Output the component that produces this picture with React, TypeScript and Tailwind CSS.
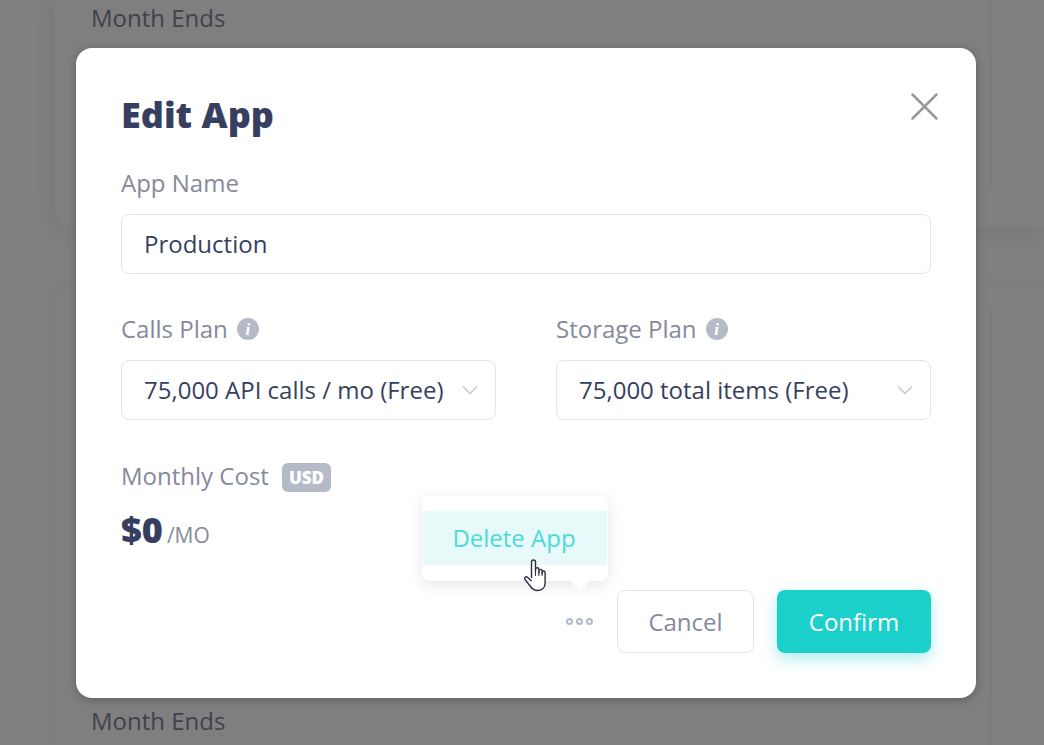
const FONT = "font-['Open_Sans',sans-serif]";

function Chevron() {
  return (
    <svg width="16" height="10" viewBox="0 0 16 10" fill="none" className="shrink-0">
      <path d="M1 1.500 8 8.500 15 1.500" stroke="#c4c8d2" strokeWidth="1.500" />
    </svg>
  );
}

function InfoIcon() {
  return (
    <span className="flex h-[22px] w-[22px] items-center justify-center rounded-full bg-[#b5bac8] font-['Liberation_Serif',serif] text-[17px] font-bold italic leading-none text-white">
      i
    </span>
  );
}

function SelectBox({ label, value }: { label: string; value: string }) {
  return (
    <div className="flex-1">
      <div className="mb-[15px] flex h-[32px] items-center gap-[9px] text-[24px] text-[#858a9c]">
        {label}
        <InfoIcon />
      </div>
      <div className="flex h-[60px] items-center justify-between rounded-[8px] border border-[#e3e3ee] pl-[22px] pr-[17px] text-[24px] text-[#373f61]">
        <span>{value}</span>
        <Chevron />
      </div>
    </div>
  );
}

export default function App() {
  return (
    <div className={`relative h-[745px] w-[1044px] overflow-hidden bg-[#7f7f7f] ${FONT}`}>
      {/* Page behind the overlay */}
      <div className="flex h-full flex-col">
        <div className="relative ml-[54px] h-[228px] rounded-bl-[22px] bg-[#7f7f7f] shadow-[0_2px_20px_rgba(0,0,0,0.07)]">
          <div className="pl-[37px] pt-[2px] text-[24px] leading-[32px] text-[#3f424d]">Month Ends</div>
          <div className="absolute bottom-[38px] right-[53px] top-0 w-px bg-[#74747f]" />
        </div>
        <div className="relative ml-[54px] mt-[57px] flex-1 rounded-tl-[22px] bg-[#7f7f7f] shadow-[0_0_16px_rgba(0,0,0,0.02)]">
          <div className="absolute bottom-0 right-[53px] top-[25px] w-px bg-[#74747f]" />
          <div className="absolute bottom-[8px] left-[37px] text-[24px] leading-[32px] text-[#3f424d]">Month Ends</div>
        </div>
      </div>

      {/* Modal */}
      <div className="absolute left-[76px] top-[48px] h-[650px] w-[900px] rounded-[16px] bg-white px-[45px] pt-[42px] shadow-[0_2px_10px_rgba(0,0,0,0.25)]">
        <button className="absolute right-[38px] top-[45px]">
          <svg width="27" height="27" viewBox="0 0 27 27" fill="none">
            <path d="M1.500 1.500 25.500 25.500M25.500 1.500 1.500 25.500" stroke="#97999f" strokeWidth="2.500" strokeLinecap="round" />
          </svg>
        </button>
        <h1 className="text-[36px] font-extrabold leading-[50px] text-[#373f61]">Edit App</h1>
        <div className="mt-[27px] h-[32px] text-[24px] leading-[32px] text-[#858a9c]">App Name</div>
        <div className="mt-[15px] flex h-[60px] items-center rounded-[8px] border border-[#e3e3ee] pl-[22px] text-[24px] text-[#373f61]">
          Production
        </div>

        <div className="mt-[39px] flex gap-[60px]">
          <SelectBox label="Calls Plan" value="75,000 API calls / mo (Free)" />
          <SelectBox label="Storage Plan" value="75,000 total items (Free)" />
        </div>

        <div className="mt-[40px] flex h-[32px] items-center gap-[13px] text-[24px] text-[#858a9c]">
          Monthly Cost
          <span className="mt-[3px] rounded-[6px] bg-[#b5bac8] px-[7px] text-[17px] font-extrabold leading-[29px] text-white">USD</span>
        </div>
        <div className="mt-[13px] flex items-baseline gap-[4px]">
          <span className="text-[36px] font-extrabold leading-[50px] text-[#373f61]">$0</span>
          <span className="text-[21px] text-[#858a9c]">/MO</span>
        </div>

        <div className="absolute bottom-[45px] right-[45px] flex items-center">
          <div className="mr-[24px] flex gap-[3px]">
            <span className="h-[7px] w-[7px] rounded-full border-[2px] border-[#b5bac8]" />
            <span className="h-[7px] w-[7px] rounded-full border-[2px] border-[#b5bac8]" />
            <span className="h-[7px] w-[7px] rounded-full border-[2px] border-[#b5bac8]" />
          </div>
          <button className="mr-[23px] h-[63px] w-[137px] rounded-[8px] border border-[#e3e3ee] text-[24px] text-[#858a9c]">Cancel</button>
          <button className="h-[63px] w-[154px] rounded-[8px] bg-[#1bcfcb] text-[24px] text-white shadow-[0_6px_16px_rgba(27,207,203,0.35)]">Confirm</button>
        </div>

        {/* Popover */}
        <div className="absolute left-[346px] top-[448px] h-[85px] w-[186px] rounded-[8px] bg-white py-[15px] shadow-[0_4px_16px_rgba(0,0,0,0.1)]">
          <div className="mx-px flex h-[54px] items-center justify-center bg-[#e7f9f9] pr-[2px] text-[24px] text-[#4bdbd6]">Delete App</div>
          <span className="absolute bottom-[-7px] left-[151px] h-[14px] w-[14px] rotate-45 rounded-[2px] bg-white" />
        </div>

        {/* Hand cursor */}
        <svg className="absolute left-[447px] top-[510px]" width="26" height="34" viewBox="0 0 26 34" fill="none">
          <path
            d="M8.500 20V4a2 2 0 0 1 4 0v10l0-2.500a1.700 1.700 0 0 1 3.400 0V15l0-2a1.600 1.600 0 0 1 3.200 0v2.500l0-1a1.500 1.500 0 0 1 3 0V25c0 4-2.500 7.500-7.500 7.500-3.500 0-5.500-1.500-7.500-4.500L2 21.500c-1.200-1.500.8-3.500 2.500-2.200L8.500 23"
            fill="white"
            stroke="#2b2f3f"
            strokeWidth="1.400"
            strokeLinejoin="round"
          />
          <path d="M12.500 12v6M15.900 13v5M19.100 14v4" stroke="#2b2f3f" strokeWidth="1" />
        </svg>
      </div>
    </div>
  );
}
